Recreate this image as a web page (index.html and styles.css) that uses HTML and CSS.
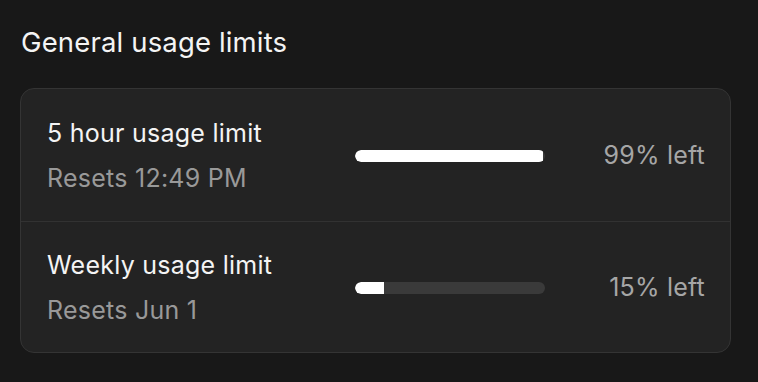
FILE: index.html
```html
<!DOCTYPE html>
<html>
<head>
<meta charset="utf-8">
<link rel="stylesheet" href="styles.css">
</head>
<body>
<section class="panel">
  <h2 class="title">General usage limits</h2>
  <div class="card">
    <div class="row">
      <div class="info">
        <div class="label">5 hour usage limit</div>
        <div class="sub">Resets 12:49 PM</div>
      </div>
      <div class="track"><div class="fill" style="width:99%"></div></div>
      <div class="pct">99% left</div>
    </div>
    <div class="row">
      <div class="info">
        <div class="label">Weekly usage limit</div>
        <div class="sub">Resets Jun 1</div>
      </div>
      <div class="track"><div class="fill" style="width:15%"></div></div>
      <div class="pct">15% left</div>
    </div>
  </div>
</section>
</body>
</html>
```

FILE: styles.css
```css
html, body {
  margin: 0;
  padding: 0;
  background: #181818;
  width: 758px;
  height: 382px;
  overflow: hidden;
}
body {
  font-family: Inter, "Noto Sans", sans-serif;
  color: #f2f2f2;
}
.panel {
  padding: 25px 27px 0 20px;
}
.title {
  margin: 0 0 0 1px;
  font-size: 27.5px;
  font-weight: 400;
  line-height: 34px;
  letter-spacing: 0.15px;
  color: #f4f4f4;
}
.card {
  margin-top: 29px;
  background: #232323;
  border: 1px solid #343434;
  border-radius: 14px;
}
.row {
  display: flex;
  align-items: center;
  height: 132px;
  padding: 0 25px 0 26px;
}
.row + .row {
  border-top: 1px solid #323232;
  height: 130px;
}
.info {
  width: 308px;
  flex-shrink: 0;
  display: flex;
  flex-direction: column;
  gap: 15px;
}
.label {
  font-size: 25px;
  line-height: 30px;
  letter-spacing: 0.25px;
  color: #f4f4f4;
}
.sub {
  font-size: 25px;
  line-height: 30px;
  letter-spacing: 0.25px;
  color: #999999;
}
.track {
  width: 190px;
  height: 12px;
  margin-top: 2px;
  border-radius: 6px;
  background: #3a3a3a;
  overflow: hidden;
}
.fill {
  height: 100%;
  background: #ffffff;
  border-radius: 6px 0 0 6px;
}
.pct {
  margin-left: auto;
  font-size: 25px;
  line-height: 30px;
  letter-spacing: 0.2px;
  color: #a6a6a6;
}
```
